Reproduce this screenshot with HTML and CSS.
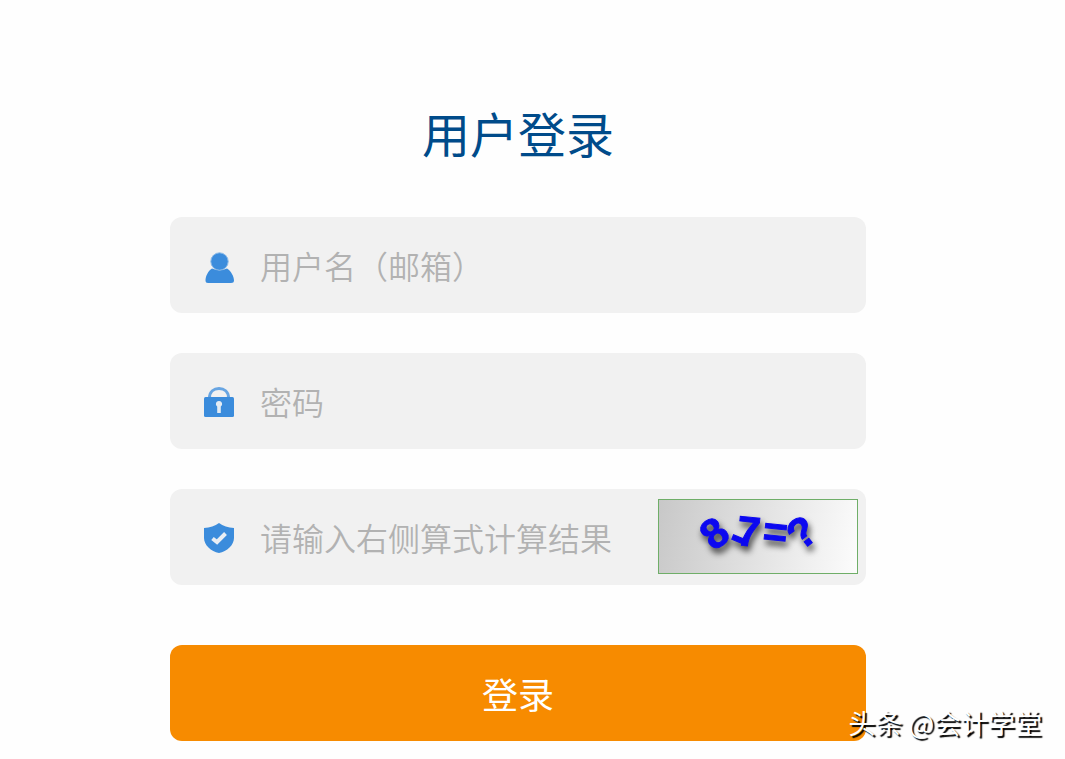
FILE: index.html
```html
<!DOCTYPE html>
<html lang="zh-CN">
  <head>
    <meta charset="UTF-8" />
    <meta name="viewport" content="width=device-width, initial-scale=1.0" />
    <title>用户登录</title>
    <link rel="stylesheet" href="styles.css">
  </head>
  <body>
    <main class="login">
      <h1>用户登录</h1>

      <form class="login-form">
        <!-- User name -->
        <div class="field">
          <svg class="icon" viewBox="0 -2 30 30" aria-hidden="true">
            <path d="M8 15.500Q15.500 19 23 15.500C27 18 30 23.500 30 27.500Q30 30 27 30H4Q1.500 30 1.500 27.500C1.500 23.500 4 18 8 15.500Z" />
            <circle class="head" cx="15.500" cy="8.500" r="8.700" />
          </svg>
          <input type="text" name="username" aria-label="用户名（邮箱）" placeholder="用户名（邮箱）" />
        </div>

        <!-- Password -->
        <div class="field">
          <svg class="icon" viewBox="0 0 30 30" aria-hidden="true">
            <path class="shackle" d="M5.500 11C5.500 4.500 10 1.500 15 1.500S24.500 4.500 24.500 11" />
            <rect y="10" width="30" height="20" rx="1.500" />
            <path class="keyhole" d="M15 14a3 3 0 0 1 1.800 5.500V26h-3.600V19.500A3 3 0 0 1 15 14Z" />
          </svg>
          <input type="password" name="password" aria-label="密码" placeholder="密码" />
        </div>

        <!-- Captcha -->
        <div class="field">
          <svg class="icon" viewBox="0 0 30 30" aria-hidden="true">
            <path d="M15 0C19 3 24 4.500 30 5V15C30 22 23 28.500 15 30C7 28.500 0 22 0 15V5C6 4.500 11 3 15 0Z" />
            <path class="check" d="M8.500 15.500L13 19L21.500 10.500" />
          </svg>
          <input type="text" name="captcha" aria-label="请输入右侧算式计算结果" placeholder="请输入右侧算式计算结果" />
          <svg class="captcha" viewBox="0 0 198 73" role="img" aria-label="8-7=?">
            <g class="captcha-text">
              <text x="44" y="48" transform="rotate(-38 55 34)">8</text>
              <text x="72" y="50" transform="rotate(22 79 38)">-</text>
              <text x="78" y="46" transform="rotate(6 89 32)">7</text>
              <text x="104" y="46" transform="rotate(6 116 34)">=</text>
              <text x="131" y="47" transform="rotate(-38 143 34)">?</text>
            </g>
          </svg>
        </div>

        <button type="submit">登录</button>
      </form>
    </main>

    <div class="watermark">头条 @会计学堂</div>
  </body>
</html>
```
FILE: styles.css
```css
body {
  margin: 0;
  padding: 0 29px 0 0;
  background-color: #fefefe;
  font-family: "Noto Sans CJK SC", sans-serif;
}
.login {
  width: 68%;
  max-width: 696px;
  min-width: 320px;
  margin: 0 auto;
  padding: 96px 0 18px;
}
h1 {
  margin: 0 0 49px;
  color: #004b8a;
  font-size: 48px;
  font-weight: 400;
  line-height: 72px;
  text-align: center;
}
.login-form {
  display: flex;
  flex-direction: column;
  gap: 40px;
}
.field {
  display: flex;
  align-items: center;
  height: 96px;
  padding: 0 8px 0 34px;
  box-sizing: border-box;
  background-color: #f1f1f1;
  border-radius: 12px;
}
.icon {
  flex: none;
  width: 30px;
  height: 30px;
  margin: 2px 26px 0 0;
  overflow: visible;
  fill: #3b8cdc;
}
.head {
  stroke: #8dbbe8;
  stroke-width: 1;
}
.shackle {
  fill: none;
  stroke: #68a5e2;
  stroke-width: 3;
}
.keyhole {
  fill: #e3ebf3;
}
.check {
  fill: none;
  stroke: #e8eef4;
  stroke-width: 4;
}
input {
  flex: 1;
  min-width: 0;
  height: 64px;
  padding: 0;
  border: none;
  outline: none;
  background: none;
  color: #333;
  font-family: inherit;
  font-size: 32px;
  font-weight: 350;
}
input::placeholder {
  color: #b2b2b2;
  opacity: 1;
}
.captcha {
  flex: none;
  width: 198px;
  height: 73px;
  margin-bottom: 2px;
  border: 1px solid #6fae68;
  background: linear-gradient(100deg, #c8c8c8, #fcfcfc);
}
.captcha-text {
  fill: #0c08f0;
  stroke: #0c08f0;
  stroke-width: 1;
  font-family: "Liberation Sans", sans-serif;
  font-size: 42px;
  font-weight: 700;
  filter: drop-shadow(2px 5px 3px rgba(0, 0, 0, 0.7));
}
button {
  height: 96px;
  margin-top: 20px;
  border: none;
  border-radius: 12px;
  background-color: #f78b00;
  color: #fff;
  font-family: inherit;
  font-size: 36px;
  cursor: pointer;
}
.watermark {
  position: absolute;
  right: 23px;
  bottom: 16px;
  color: #fff;
  font-size: 27px;
  line-height: 40px;
  text-shadow: 2px 2px 1px #000;
}
```
